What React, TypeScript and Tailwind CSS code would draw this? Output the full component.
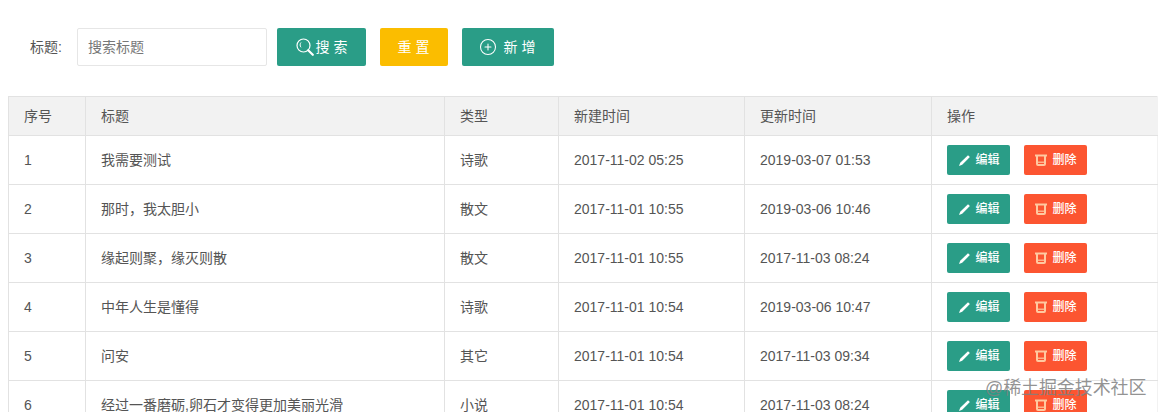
import { CirclePlus } from "lucide-react";

const rows = [
  { id: 1, title: "我需要测试", type: "诗歌", created: "2017-11-02 05:25", updated: "2019-03-07 01:53" },
  { id: 2, title: "那时，我太胆小", type: "散文", created: "2017-11-01 10:55", updated: "2019-03-06 10:46" },
  { id: 3, title: "缘起则聚，缘灭则散", type: "散文", created: "2017-11-01 10:55", updated: "2017-11-03 08:24" },
  { id: 4, title: "中年人生是懂得", type: "诗歌", created: "2017-11-01 10:54", updated: "2019-03-06 10:47" },
  { id: 5, title: "问安", type: "其它", created: "2017-11-01 10:54", updated: "2017-11-03 09:34" },
  { id: 6, title: "经过一番磨砺,卵石才变得更加美丽光滑", type: "小说", created: "2017-11-01 10:54", updated: "2017-11-03 08:24" },
];

function SearchIcon() {
  return (
    <svg width="18" height="18" viewBox="0 0 18 18" fill="none" stroke="currentColor" strokeWidth="1.2">
      <circle cx="7.5" cy="7.5" r="6.5" />
      <path d="M5 4.5c-1.2 1.4-1.2 3.4 0 4.8" strokeWidth="1" />
      <path d="M12.2 12.2l4.6 4.6" strokeWidth="2.2" strokeLinecap="round" />
    </svg>
  );
}

function PencilIcon() {
  return (
    <svg width="13" height="13" viewBox="0 0 13 13" fill="currentColor">
      <path d="M10 1.2l1.9 1.9L4.2 10.8 1 12l1.2-3.2z" />
    </svg>
  );
}

function TrashIcon() {
  return (
    <svg width="12" height="12" viewBox="0 0 12 12" fill="none" stroke="currentColor">
      <path d="M0 1.5h12" strokeWidth="2" />
      <path d="M2 2v8c0 .6.4 1 1 1h6c.6 0 1-.4 1-1V2" strokeWidth="2" />
      <path d="M3 8.2h6" strokeWidth="1.2" />
    </svg>
  );
}

export default function App() {
  return (
    <div className="h-[412px] w-[1160px] overflow-hidden bg-white relative font-['Liberation_Sans','Noto_Sans_CJK_SC',sans-serif] text-[14px] text-[#555]">
      <div className="flex items-center h-[96px] pb-[2px] pl-[30px]">
        <label className="w-[47px] text-[#555]">标题:</label>
        <input
          placeholder="搜索标题"
          className="w-[190px] h-[38px] px-[10px] border border-[#e6e6e6] rounded-[2px] outline-none placeholder:text-[#777]"
        />
        <button className="ml-[10px] w-[89px] h-[38px] bg-[#2a9d87] rounded-[2px] text-white text-[14px] flex items-center justify-center gap-[2px] tracking-[4px] pl-[4px]">
          <SearchIcon />
          搜索
        </button>
        <button className="ml-[14px] w-[68px] h-[38px] bg-[#fbbd00] rounded-[2px] text-white text-[14px] tracking-[4px] pl-[3px]">
          重置
        </button>
        <button className="ml-[14px] w-[92px] h-[38px] bg-[#2a9d87] rounded-[2px] text-white text-[14px] flex items-center justify-center gap-[7px] tracking-[4px] pl-[2px]">
          <CirclePlus size={18} strokeWidth={1.4} />
          新增
        </button>
      </div>
      <table className="ml-[8px] w-[1149px] table-fixed border-collapse">
        <colgroup>
          <col className="w-[77px]" />
          <col className="w-[359px]" />
          <col className="w-[114px]" />
          <col className="w-[186px]" />
          <col className="w-[187px]" />
          <col className="w-[226px]" />
        </colgroup>
        <thead>
          <tr className="h-[39px] bg-[#f2f2f2]">
            {["序号", "标题", "类型", "新建时间", "更新时间", "操作"].map((h) => (
              <th key={h} className="border border-[#e2e2e2] last:border-r-[#f2f2f2] px-[15px] text-left font-normal">
                {h}
              </th>
            ))}
          </tr>
        </thead>
        <tbody>
          {rows.map((r) => (
            <tr key={r.id} className="h-[49px]">
              <td className="border border-[#e2e2e2] px-[15px]">{r.id}</td>
              <td className="border border-[#e2e2e2] px-[15px]">{r.title}</td>
              <td className="border border-[#e2e2e2] px-[15px]">{r.type}</td>
              <td className="border border-[#e2e2e2] px-[15px]">{r.created}</td>
              <td className="border border-[#e2e2e2] px-[15px]">{r.updated}</td>
              <td className="border border-[#e2e2e2] border-r-[#f2f2f2] px-[15px]">
                <div className="flex gap-[14px]">
                  <button className="w-[63px] h-[30px] bg-[#2a9d87] rounded-[2px] text-white text-[12px] font-medium flex items-center justify-center gap-[4px] pl-[1px]">
                    <PencilIcon />
                    编辑
                  </button>
                  <button className="w-[63px] h-[30px] bg-[#fc5531] rounded-[2px] text-white text-[12px] font-medium flex items-center justify-center gap-[5px] pl-[1px]">
                    <span className="text-[#ffc9a0]">
                      <TrashIcon />
                    </span>
                    删除
                  </button>
                </div>
              </td>
            </tr>
          ))}
        </tbody>
      </table>
      <div className="absolute left-[985px] top-[376px] text-[18px] leading-[24px] tracking-[-0.1px] text-[#808080]/85">
        @稀土掘金技术社区
      </div>
    </div>
  );
}
